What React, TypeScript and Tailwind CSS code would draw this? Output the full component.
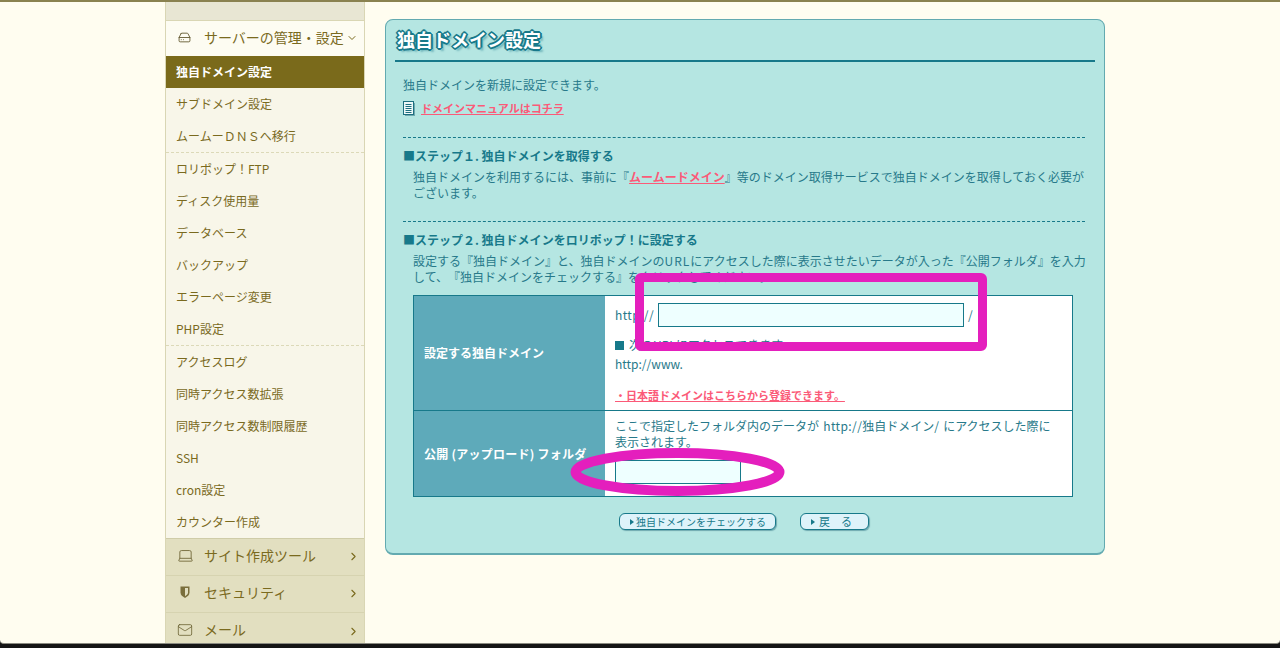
import { ChevronDown, ChevronRight, HardDrive, Laptop, Mail } from "lucide-react";

const font = "font-['Noto_Sans_CJK_JP','Liberation_Sans',sans-serif]";

const groups = [
  ["独自ドメイン設定", "サブドメイン設定", "ムームーＤＮＳへ移行"],
  ["ロリポップ！FTP", "ディスク使用量", "データベース", "バックアップ", "エラーページ変更", "PHP設定"],
  ["アクセスログ", "同時アクセス数拡張", "同時アクセス数制限履歴", "SSH", "cron設定", "カウンター作成"],
];

function ShieldIcon() {
  return (
    <svg width="16" height="16" viewBox="0 0 16 16">
      <path d="M3.5 2.5h9v6c0 2.5-2 4-4.5 5.5-2.500-1.500-4.500-3-4.500-5.500z" fill="#7a6f3c" />
      <path d="M8 4h3v4.500c0 1.500-1.200 2.600-3 3.700z" fill="#e2dfc0" />
    </svg>
  );
}

function Sidebar() {
  return (
    <aside className="w-[200px] shrink-0 border-x border-[#d9d6b4] bg-[#f8f6e9] text-[12px] text-[#7a6a1e]">
      <div className="h-[18px] bg-[#e8e6d3]" />
      <div className="flex h-[36px] items-center border-t border-[#d9d6b4] bg-[#fdfcf2] pb-[3px] pl-[12px] text-[14px]">
        <HardDrive size={13} strokeWidth={1.6} className="mt-[1px] text-[#5e5428]" />
        <span className="ml-[13px] whitespace-nowrap">サーバーの管理・設定</span>
        <ChevronDown size={12} className="ml-[2px] mt-[1px]" />
      </div>
      {groups.map((group, i) => (
        <div key={i} className={i < 2 ? "border-b border-dashed border-[#dcd9b8]" : ""}>
          {group.map((name) => (
            <div
              key={name}
              className={
                name === "独自ドメイン設定"
                  ? "flex h-[32px] items-center bg-[#7a6a1b] pl-[10px] font-bold text-white"
                  : "flex h-[32px] items-center pl-[10px]"
              }
            >
              {name}
            </div>
          ))}
        </div>
      ))}
      <div className="border-t border-[#cfcca8] bg-[#e2dfc0] text-[14px]">
        <div className="flex h-[37px] items-center border-b border-[#d6d3b0] pb-[4px] pl-[11px] pr-[4px]">
          <Laptop size={17} strokeWidth={1.2} className="text-[#6b6232]" />
          <span className="ml-[10px] flex-1">サイト作成ツール</span>
          <ChevronRight size={13} className="mt-[3px]" />
        </div>
        <div className="flex h-[37px] items-center border-b border-[#d6d3b0] pb-[4px] pl-[11px] pr-[4px]">
          <ShieldIcon />
          <span className="ml-[11px] flex-1">セキュリティ</span>
          <ChevronRight size={13} className="mt-[3px]" />
        </div>
        <div className="flex h-[37px] items-center pb-[4px] pl-[11px] pr-[4px]">
          <Mail size={16} strokeWidth={1.2} className="text-[#6b6232]" />
          <span className="ml-[11px] flex-1">メール</span>
          <ChevronRight size={13} className="mt-[3px]" />
        </div>
      </div>
    </aside>
  );
}

function DocIcon() {
  return (
    <svg width="12" height="15" viewBox="0 0 12 15" className="shrink-0">
      <rect x="2" y="2" width="10" height="13" fill="#6fa9b0" />
      <rect x="0.500" y="0.500" width="10" height="13" fill="#eef8f8" stroke="#1d6f80" />
      <path d="M2.500 3.500h6M2.500 5.500h6M2.500 7.500h6M2.500 9.500h6M2.500 11.500h6" stroke="#1d6f80" />
    </svg>
  );
}

function CheckButton({ label, className }: { label: string; className: string }) {
  return (
    <button
      className={`flex h-[17px] items-center rounded-[6px] border border-[#17798a] bg-[#def3fa] leading-none text-[#17798a] shadow-[1px_1px_1px_#6fa9b0] ${className}`}
    >
      <span className="mr-[2px] h-0 w-0 border-y-[3px] border-l-[4px] border-y-transparent border-l-[#17798a]" />
      {label}
    </button>
  );
}

function Panel() {
  return (
    <main className="ml-[20px] mt-[17px] h-[536px] w-[720px] rounded-[8px] border border-b-2 border-[#63aab0] bg-[#b5e6e2] px-[9px] text-[12px] leading-[16px] text-[#27798a] [text-spacing-trim:space-all]">
      <h1 className="flex h-[42px] items-center border-b-2 border-[#17798a] pb-[3px] pl-[2px] text-[18px] font-bold text-white [text-shadow:-1px_-1px_0_#17798a,1px_-1px_0_#17798a,-1px_1px_0_#17798a,1px_1px_0_#17798a,0_-2px_0_#17798a,0_2px_0_#17798a,-2px_0_0_#17798a,2px_0_0_#17798a,3px_3px_2px_#6fb4ba]">
        独自ドメイン設定
      </h1>
      <div className="px-[8px]">
        <p className="mt-[15px]">独自ドメインを新規に設定できます。</p>
        <p className="mt-[7px] flex items-center gap-[6px]">
          <DocIcon />
          <a className="text-[11px] font-bold text-[#fb5a78] underline">ドメインマニュアルはコチラ</a>
        </p>
        <div className="mr-[2px] mt-[21px] border-t border-dashed border-[#17798a]" />
        <h2 className="mt-[10px] font-bold text-[#17798a]">■ステップ１. 独自ドメインを取得する</h2>
        <p className="mt-[5px] pl-[10px]">
          独自ドメインを利用するには、事前に『
          <a className="font-bold text-[#fb5a78] underline">ムームードメイン</a>
          』等のドメイン取得サービスで独自ドメインを取得しておく必要がございます。
        </p>
        <div className="mr-[2px] mt-[20px] border-t border-dashed border-[#17798a]" />
        <h2 className="mt-[10px] font-bold text-[#17798a]">■ステップ２. 独自ドメインをロリポップ！に設定する</h2>
        <p className="mt-[5px] pl-[10px]">
          設定する『独自ドメイン』と、独自ドメインの<span className="tracking-[1px]">URL</span>にアクセスした際に表示させたいデータが入った『公開フォルダ』を入力して、『独自ドメインをチェックする』をクリックしてください。
        </p>
        <div className="ml-[10px] mt-[10px] w-[660px] border border-[#17798a] bg-white">
          <div className="flex h-[115px] border-b border-[#17798a]">
            <div className="flex w-[191px] shrink-0 items-center bg-[#5eaaba] pl-[10px] font-bold text-white">
              設定する独自ドメイン
            </div>
            <div className="pl-[10px] pt-[7px]">
              <div className="flex h-[24px] items-center">
                <span className="tracking-[0.4px]">http://</span>
                <input className="ml-[4px] mr-[4px] h-[24px] w-[306px] border border-[#17798a] bg-[#eeffff]" />/
              </div>
              <p className="mt-[10px] flex items-center">
                <span className="mr-[5px] h-[9px] w-[9px] bg-[#17798a]" />
                次のURLにアクセスできます。
              </p>
              <p className="mt-[3px]">http://www.</p>
              <a className="mt-[15px] block text-[11px] font-bold text-[#fb5a78] underline">・日本語ドメインはこちらから登録できます。</a>
            </div>
          </div>
          <div className="flex h-[85px]">
            <div className="flex w-[191px] shrink-0 items-center bg-[#5eaaba] pl-[10px] font-bold tracking-[0.25px] text-white">
              公開 (アップロード) フォルダ
            </div>
            <div className="pl-[10px] pr-[20px] pt-[7px]">
              <p className="[word-spacing:1.5px]">
                ここで指定したフォルダ内のデータが <span className="tracking-[0.4px]">http://</span>独自ドメイン/ にアクセスした際に表示されます。
              </p>
              <input className="mt-[10px] block h-[24px] w-[126px] border border-[#17798a] bg-[#eeffff]" />
            </div>
          </div>
        </div>
        <div className="ml-[216px] mt-[16px] flex gap-[24px]">
          <CheckButton label="独自ドメインをチェックする" className="w-[157px] pl-[10px] text-[10px]" />
          <CheckButton label="戻　る" className="w-[69px] gap-[2px] pl-[10px] text-[11px]" />
        </div>
      </div>
    </main>
  );
}

export default function App() {
  return (
    <div className={`relative h-[648px] w-[1280px] overflow-hidden bg-[#151515] ${font}`}>
      <div className="flex h-[644px] flex-col overflow-hidden rounded-b-[4px] border-b border-[#8a8a80] bg-[#fffdf0]">
        <div className="h-[2px] shrink-0 bg-[#8a8250]" />
        <div className="flex h-[642px] pl-[165px]">
          <Sidebar />
          <Panel />
        </div>
      </div>
      {/* hand-drawn marks over the screenshot */}
      <svg className="absolute left-0 top-0" width="1280" height="648" viewBox="0 0 1280 648" fill="none">
        <rect x="639.500" y="277.500" width="343" height="69" rx="1.500" stroke="#e41fbd" strokeWidth="9" />
        <ellipse cx="677.500" cy="472" rx="102" ry="19" stroke="#e41fbd" strokeWidth="10" />
      </svg>
    </div>
  );
}
